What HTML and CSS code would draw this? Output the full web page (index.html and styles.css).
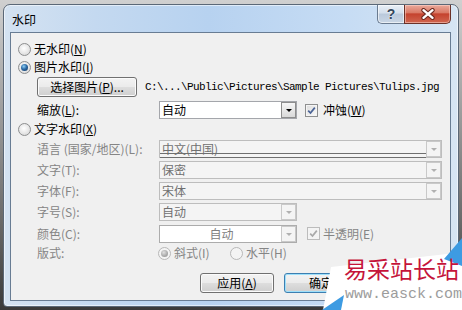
FILE: index.html
```html
<!DOCTYPE html>
<html lang="zh-CN">
<head>
<meta charset="utf-8">
<title>水印</title>
<link rel="stylesheet" href="styles.css">
</head>
<body>
<div class="desk">
  <div class="window">
    <div class="titlebar">
      <span class="title">水印</span>
      <div class="caption">
        <div class="cbtn help">?</div>
        <div class="cbtn close">
          <svg width="16" height="12" viewBox="-8 -6 16 12">
            <path d="M-4.5 -3.8 L4.5 3.8 M4.5 -3.8 L-4.5 3.8" stroke="#6d2a20" stroke-width="4.4" stroke-linecap="round"/>
            <path d="M-4.5 -3.8 L4.5 3.8 M4.5 -3.8 L-4.5 3.8" stroke="#ffffff" stroke-width="2.4" stroke-linecap="round"/>
          </svg>
        </div>
      </div>
    </div>
    <div class="client">
      <div class="row radio-row row-first"><span class="radio"></span><span>无水印(<u>N</u>)</span></div>
      <div class="row radio-row"><span class="radio on"></span><span>图片水印(<u>I</u>)</span></div>
      <div class="row field-row row-btn">
        <div class="btn pick">选择图片(<u>P</u>)...</div>
        <span class="path">C:\...\Public\Pictures\Sample Pictures\Tulips.jpg</span>
      </div>
      <div class="row field-row row-scale">
        <span class="label">缩放(<u>L</u>):</span>
        <div class="combo short"><span class="ctext">自动</span><span class="dd"><i class="arrow"></i></span></div>
        <span class="check on chk-wash"><svg width="9" height="9" viewBox="0 0 9 9"><path d="M1.2 4.6 L3.5 7 L7.8 1.6" fill="none" stroke="#4a6396" stroke-width="1.7"/></svg></span>
        <span class="chk-label">冲蚀(<u>W</u>)</span>
      </div>
      <div class="row radio-row row-text"><span class="radio"></span><span>文字水印(<u>X</u>)</span></div>
      <div class="row field-row row-lang dis">
        <span class="label">语言 (国家/地区)(L):</span>
        <div class="combo wide off"><span class="ctext lines">中文(中国)</span><span class="dd"><i class="arrow"></i></span></div>
      </div>
      <div class="row field-row row-gap3 dis">
        <span class="label">文字(T):</span>
        <div class="combo wide off"><span class="ctext">保密</span><span class="dd"><i class="arrow"></i></span></div>
      </div>
      <div class="row field-row row-gap3 dis">
        <span class="label">字体(F):</span>
        <div class="combo wide off"><span class="ctext">宋体</span><span class="dd"><i class="arrow"></i></span></div>
      </div>
      <div class="row field-row row-gap3 dis">
        <span class="label">字号(S):</span>
        <div class="combo short off"><span class="ctext">自动</span><span class="dd"><i class="arrow"></i></span></div>
      </div>
      <div class="row field-row row-gap3 row-color dis">
        <span class="label">颜色(C):</span>
        <div class="combo short colorbox"><span class="ctext center">自动</span><span class="dd"><i class="arrow"></i></span></div>
        <span class="check on off chk-semi"><svg width="9" height="9" viewBox="0 0 9 9"><path d="M1.2 4.6 L3.5 7 L7.8 1.6" fill="none" stroke="#a9a9a9" stroke-width="1.7"/></svg></span>
        <span class="chk-label2">半透明(E)</span>
      </div>
      <div class="row field-row row-layout dis">
        <span class="label">版式:</span>
        <span class="opt opt1"><span class="radio on off"></span><span>斜式(I)</span></span>
        <span class="opt"><span class="radio off"></span><span>水平(H)</span></span>
      </div>
      <div class="row row-buttons">
        <div class="btn act">应用(<u>A</u>)</div>
        <div class="btn act default">确定</div>
        <div class="btn act" aria-label="取消"></div>
      </div>
    </div>
  </div>
  <div class="wm">
    <svg class="wm-shape" width="142" height="75" viewBox="320 235 142 75">
      <polygon points="331,267 447,254 462,252 462,310 323,310" fill="#ffffff"/>
      <polygon points="444,259 462,238 462,266" fill="#3d9be2"/>
      <polygon points="322,310 344,295 341,310" fill="#3d9be2"/>
    </svg>
    <span class="wm-cn">易采站长站</span>
    <span class="wm-en">www.easck.com</span>
  </div>
</div>
</body>
</html>
```
FILE: styles.css
```css
* { box-sizing: border-box; }
html, body { margin: 0; padding: 0; }
body {
  width: 462px;
  height: 310px;
  overflow: hidden;
  font-family: "Noto Sans CJK SC", "Liberation Sans", sans-serif;
  font-size: 12px;
  color: #000;
}
u { text-decoration: underline; text-underline-offset: 1px; }

.desk {
  position: relative;
  width: 462px;
  height: 310px;
  padding: 4px 3px 0 3px;
  background: linear-gradient(#d0d0d0 0, #a6a6a6 30%, #6c6c6c 70%, #3a3a3a 100%);
}

.window {
  width: 456px;
  height: 303px;
  border: 1px solid #5b6877;
  border-radius: 7px 7px 4px 4px;
  background: linear-gradient(to right, #d4e2f1 0, #c4d9f0 20%, #b7d2f0 45%, #c6dcf4 75%, #d7e5f3 100%);
  box-shadow: inset 0 0 0 1px rgba(255,255,255,0.55);
  display: flex;
  flex-direction: column;
}

.titlebar {
  height: 27px;
  flex: none;
  display: flex;
  justify-content: space-between;
  align-items: flex-start;
  padding: 0 7px 0 8px;
}
.title {
  margin-top: 7px;
  line-height: 16px;
  font-size: 12px;
}
.caption { display: flex; }
.cbtn {
  height: 19px;
  display: flex;
  align-items: center;
  justify-content: center;
}
.help {
  width: 27px;
  border: 1px solid #6a7b90;
  border-top: none;
  border-right: none;
  border-radius: 0 0 0 5px;
  background: linear-gradient(#e9eff7 0, #d3deeb 45%, #bac9db 50%, #c9d6e5 100%);
  box-shadow: inset 0 0 0 1px rgba(255,255,255,0.6);
  font-family: "Liberation Sans", sans-serif;
  font-weight: bold;
  font-size: 14px;
  color: #34465c;
  text-shadow: 0 0 2px #fff;
}
.close {
  width: 47px;
  border: 1px solid #6b3128;
  border-top: none;
  border-radius: 0 0 5px 0;
  background: linear-gradient(#eaa99b 0, #da7b67 42%, #c5432e 50%, #d06650 100%);
  box-shadow: inset 0 0 0 1px rgba(255,220,210,0.5);
}

.client {
  flex: none;
  width: 441px;
  height: 269px;
  margin-left: 6px;
  border: 1px solid #687c93;
  background: #f0f0f0;
  padding-top: 7px;
}

.row {
  display: flex;
  align-items: center;
  height: 18px;
  line-height: 16px;
  white-space: nowrap;
}
.radio-row { padding-left: 7px; gap: 3px; }
.field-row { padding-left: 26px; }
.label { width: 122px; flex: none; }

.row-btn { height: 20px; margin-top: 1px; }
.row-scale { margin-top: 4px; }
.row-text { margin-top: 1px; }
.row-lang { margin-top: 2px; }
.row-gap3 { margin-top: 3px; }
.row-color { height: 19px; }
.row-layout { margin-top: 1px; }
.row-buttons { height: 20px; margin-top: 11px; padding-left: 189px; gap: 10px; }

.dis { color: #858585; }

.radio {
  flex: none;
  width: 13px;
  height: 13px;
  border-radius: 50%;
  border: 1px solid #8d8e8f;
  background: radial-gradient(circle at 45% 40%, #ffffff 0, #ebebeb 45%, #cfcfcf 100%);
  display: flex;
  align-items: center;
  justify-content: center;
}
.radio.on::after {
  content: "";
  width: 7px;
  height: 7px;
  border-radius: 50%;
  background: radial-gradient(circle at 40% 35%, #8fd0f5 0, #2c6aa6 45%, #0f2f55 100%);
}
.radio.off { border-color: #b8b8b8; background: #f4f4f4; }
.radio.on.off::after { background: radial-gradient(circle at 40% 35%, #e0e0e0 0, #a8a8a8 60%, #909090 100%); }

.btn {
  flex: none;
  height: 20px;
  border: 1px solid #707070;
  border-radius: 3px;
  background: linear-gradient(#f3f3f3 0, #ebebeb 48%, #dddddd 52%, #cfcfcf 100%);
  box-shadow: inset 0 0 0 1px #fbfbfb;
  display: flex;
  align-items: center;
  justify-content: center;
  line-height: 16px;
}
.pick { width: 100px; }
.path {
  margin-left: 8px;
  font-family: "Liberation Mono", monospace;
  font-size: 11px;
  letter-spacing: -0.6px;
}
.act { width: 74px; }
.default {
  border-color: #3c7fb1;
  box-shadow: inset 0 0 0 1px #9ee0fb;
}

.combo {
  flex: none;
  height: 18px;
  display: flex;
  align-items: stretch;
  border: 1px solid #a4a6ab;
  background: #fff;
  color: #000;
}
.combo.short { width: 138px; }
.combo.wide { width: 283px; }
.ctext {
  flex: 1;
  padding-left: 2px;
  line-height: 16px;
  position: relative;
}
.ctext.center { text-align: center; color: #808080; }
.dd {
  flex: none;
  width: 15px;
  border: 1px solid #8d8d8d;
  background: linear-gradient(#f6f6f6, #d9d9d9);
  display: flex;
  align-items: center;
  justify-content: center;
}
.arrow {
  width: 0;
  height: 0;
  border-left: 3px solid transparent;
  border-right: 3px solid transparent;
  border-top: 3px solid #000;
  margin-top: 1px;
}
.combo.off {
  border-color: #bdbdbd;
  background: #f4f4f4;
  color: #707070;
}
.combo.off .dd { border-color: #c9c9c9; background: #f4f4f4; }
.combo.off .arrow { border-top-color: #b0b0b0; }
.colorbox { border-color: #acacac; }
.colorbox .dd { border-color: #c9c9c9; background: #f4f4f4; }
.colorbox .arrow { border-top-color: #b0b0b0; }
.lines::after {
  content: "";
  position: absolute;
  left: 0;
  right: 0;
  top: 12px;
  height: 3px;
  border-top: 1px solid #6f6f6f;
  border-bottom: 1px solid #6f6f6f;
}

.check {
  flex: none;
  width: 13px;
  height: 13px;
  border: 1px solid #8e8f8f;
  background: linear-gradient(135deg, #dcdcdc, #fafafa);
  box-shadow: inset 0 0 0 1px #f4f4f4;
  display: flex;
  align-items: center;
  justify-content: center;
}
.check.off { border-color: #bcbcbc; background: #f4f4f4; }
.chk-wash { margin-left: 8px; }
.chk-label { margin-left: 5px; }
.chk-semi { margin-left: 10px; }
.chk-label2 { margin-left: 3px; }

.opt { display: flex; align-items: center; gap: 3px; }
.opt1 { width: 72px; margin-left: -1px; }

.wm {
  position: absolute;
  left: 320px;
  top: 235px;
  width: 142px;
  height: 75px;
  overflow: hidden;
}
.wm-shape { position: absolute; left: 0; top: 0; }
.wm-cn {
  position: absolute;
  left: 24px;
  top: 21px;
  font-size: 23px;
  line-height: 24px;
  color: #c5143a;
  white-space: nowrap;
}
.wm-en {
  position: absolute;
  left: 25px;
  top: 52px;
  font-family: "Liberation Mono", monospace;
  font-size: 15px;
  line-height: 16px;
  color: #9c9c9c;
  white-space: nowrap;
}
```
